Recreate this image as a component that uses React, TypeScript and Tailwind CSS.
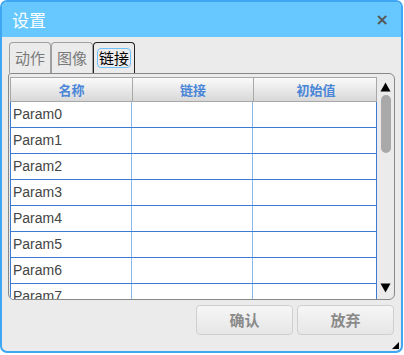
import { useState } from "react";

const cjk = "font-['Noto_Sans_CJK_SC','Noto_Sans',sans-serif]";

const rows = ["Param0", "Param1", "Param2", "Param3", "Param4", "Param5", "Param6", "Param7"];

export default function App() {
  const [tab, setTab] = useState(2);
  const tabs = ["动作", "图像", "链接"];

  return (
    <div className={`w-[404px] h-[355px] bg-white ${cjk}`}>
      <div className="w-[403px] h-[353px] border-2 border-[#3ea6f2] rounded-[7px] overflow-hidden flex flex-col bg-[#ebebeb]">
        {/* Title bar */}
        <div className="h-[35px] shrink-0 bg-[#66c8ff] flex items-center justify-between pl-[10px] pr-[12px]">
          <span className="text-white text-[17px] leading-none">设置</span>
          <span className="text-[#555] text-[16px] font-bold leading-none font-['DejaVu_Sans',sans-serif]">×</span>
        </div>

        <div className="px-[6px] pt-[5px] flex flex-col">
          {/* Tabs */}
          <div className="flex h-[31px] items-end pl-[1px]">
            {tabs.map((t, i) => (
              <button
                key={t}
                onClick={() => setTab(i)}
                className={
                  "w-[42px] h-[31px] border border-b-0 rounded-t-[4px] flex items-center justify-center text-[15px] " +
                  (i === tab
                    ? "border-[#222] text-black"
                    : "border-[#a0a0a0] text-[#7a7a7a] h-[30px]")
                }
              >
                {i === tab ? (
                  <span className="px-[1px] leading-[18px] rounded-[3px] outline outline-1 outline-[#6ec0ff]">{t}</span>
                ) : (
                  t
                )}
              </button>
            ))}
          </div>

          {/* Panel */}
          <div className="h-[227px] border border-[#888] rounded-[6px] rounded-tl-[3px] flex pl-[1px] pt-[3px] overflow-hidden">
            <div className="w-[367px] flex flex-col text-[14px]">
              <div className="h-[25px] shrink-0 grid grid-cols-[122px_121px_124px] border border-[#a8a8a8] bg-gradient-to-b from-[#fafafa] to-[#d8d8d8]">
                {["名称", "链接", "初始值"].map((h, i) => (
                  <div
                    key={h}
                    className={
                      "flex items-center justify-center text-[#4a86d8] font-bold text-[13px] " +
                      (i < 2 ? "border-r border-[#a8a8a8]" : "")
                    }
                  >
                    {h}
                  </div>
                ))}
              </div>
              <div className="bg-white flex-1 border-l border-r border-[#3d7bd0] overflow-hidden">
                {rows.map((r) => (
                  <div key={r} className="h-[26px] grid grid-cols-[121px_121px_123px] border-b border-[#3d7bd0]">
                    <div className="border-r border-[#8ab8f0] flex items-center pl-[2px] text-[#444] font-['Liberation_Sans',sans-serif] text-[14px]">
                      {r}
                    </div>
                    <div className="border-r border-[#8ab8f0]"></div>
                    <div></div>
                  </div>
                ))}
              </div>
            </div>

            {/* Scrollbar */}
            <div className="w-[17px] flex flex-col items-center pt-[5px]">
              <svg width="11" height="10" viewBox="0 0 11 10">
                <path d="M5.5 0.5 L10.5 9.5 L0.5 9.5 Z" fill="#000" />
              </svg>
              <div className="w-[10px] h-[58px] mt-[3px] rounded-[5px] bg-[#a9a9a9]"></div>
              <div className="flex-1"></div>
              <svg width="11" height="10" viewBox="0 0 11 10" className="mb-[6px]">
                <path d="M0.5 0.5 L10.5 0.5 L5.5 9.5 Z" fill="#000" />
              </svg>
            </div>
          </div>

          {/* Buttons */}
          <div className="flex justify-end gap-[4px] mt-[5px] pr-[1px]">
            {["确认", "放弃"].map((b) => (
              <button
                key={b}
                className="w-[97px] h-[30px] border border-[#cfcfcf] rounded-[4px] bg-gradient-to-b from-[#f6f6f6] to-[#e6e6e6] text-[#8a8a8a] font-bold text-[15px]"
              >
                {b}
              </button>
            ))}
          </div>
        </div>

        <div className="flex-1 flex justify-end items-end pr-[2px] pb-[2px]">
          <svg width="7" height="7" viewBox="0 0 7 7">
            <path d="M7 0 L7 7 L0 7 Z" fill="#000" />
          </svg>
        </div>
      </div>
    </div>
  );
}
